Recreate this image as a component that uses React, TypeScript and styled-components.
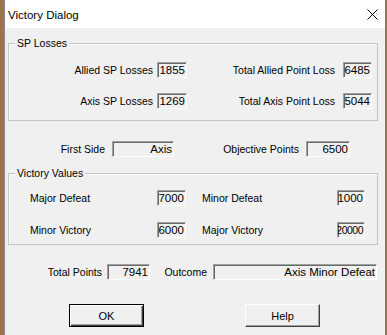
import React from "react";
import styled, { createGlobalStyle } from "styled-components";

const GlobalStyle = createGlobalStyle`
  html, body {
    margin: 0;
    padding: 0;
    height: 100%;
    overflow: hidden;
  }
  body {
    background: #9a7646;
    font-family: "Liberation Sans", Arial, sans-serif;
    font-size: 10.5px;
    color: #000;
  }
`

const Window = styled.div`
  margin-left: 4px;
  width: 381px;
  height: 335px;
  background: #f0f0f0;
  border-left: 1px solid #8a8a8a;
  box-sizing: border-box;
`
const TitleBar = styled.div`
  height: 28px;
  background: #ffffff;
  display: flex;
  align-items: center;
  justify-content: space-between;
  padding: 0 7px 0 3px;
`
const Title = styled.span`
  font-size: 11.5px;
  padding-top: 1px;
`
const Body = styled.div`
  padding: 0 7px 0 3px;
`
const GroupBox = styled.div<{ $top: number; $pt: number; $pb: number }>`
  position: relative;
  margin-top: ${(p) => p.$top}px;
  border: 1px solid #c4c4c4;
  box-shadow: inset 1px 1px #fff;
  padding: ${(p) => p.$pt}px 0 ${(p) => p.$pb}px;
  display: flex;
  flex-direction: column;
  gap: ${(p) => (p.$pt > 17 ? 15 : 16)}px;
`
const Caption = styled.span`
  position: absolute;
  top: -7px;
  left: 6px;
  padding: 0 2px;
  background: #f0f0f0;
  line-height: 13px;
`
const Row = styled.div<{ $top?: number; $left?: number }>`
  display: flex;
  align-items: center;
  margin-top: ${(p) => p.$top ?? 0}px;
  padding-left: ${(p) => p.$left ?? 0}px;
`
const Label = styled.span<{ $w: number; $gap: number; $right?: boolean; $offset?: number }>`
  width: ${(p) => p.$w}px;
  margin-left: ${(p) => p.$offset ?? 0}px;
  margin-right: ${(p) => p.$gap}px;
  text-align: ${(p) => (p.$right ? "right" : "left")};
  white-space: nowrap;
  flex-shrink: 0;
`
const Field = styled.div<{ $w: number; $tight?: boolean }>`
  width: ${(p) => p.$w}px;
  height: 16px;
  box-sizing: border-box;
  flex-shrink: 0;
  border-top: 1px solid #a0a0a0;
  border-left: 1px solid #a0a0a0;
  border-right: 1px solid #ffffff;
  border-bottom: 1px solid #ffffff;
  box-shadow: inset 1px 1px #696969;
  display: flex;
  justify-content: flex-end;
  align-items: flex-end;
  overflow: hidden;
  padding: 0 1px 0 0;
  font-size: ${(p) => (p.$tight ? 10.5 : 11.5)}px;
  letter-spacing: ${(p) => (p.$tight ? -0.5 : 0)}px;
  line-height: 13px;
  white-space: nowrap;
`
const ButtonRow = styled.div`
  display: flex;
  margin-top: 24px;
  padding-left: 61px;
  gap: 101px;
`
const Button = styled.button<{ $default?: boolean }>`
  width: 75px;
  height: 23px;
  padding: 0;
  font-family: "Liberation Sans", Arial, sans-serif;
  font-size: 11px;
  color: #000;
  background: #f0f0f0;
  box-sizing: border-box;
  border: 1px solid ${(p) => (p.$default ? "#000" : "#f0f0f0")};
  border-top-color: ${(p) => (p.$default ? "#000" : "#fff")};
  border-left-color: ${(p) => (p.$default ? "#000" : "#fff")};
  border-right-color: ${(p) => (p.$default ? "#000" : "#404040")};
  border-bottom-color: ${(p) => (p.$default ? "#000" : "#404040")};
  box-shadow: ${(p) =>
    p.$default
      ? "inset 1px 1px #fff, inset -1px -1px #404040, inset -2px -2px #a0a0a0"
      : "inset -1px -1px #a0a0a0"};
`

const CloseIcon = () => (
  <svg width="11" height="11" viewBox="0 0 11 11">
    <path d="M0.5 0.5 L10.5 10.5 M10.5 0.5 L0.5 10.5" stroke="#000" strokeWidth="1" />
  </svg>
)

const App: React.FC = () => {
  return (
    <>
      <GlobalStyle />
      <Window>
        <TitleBar>
          <Title>Victory Dialog</Title>
          <CloseIcon />
        </TitleBar>
        <Body>
          <GroupBox $top={15} $pt={18} $pb={11}>
            <Caption>SP Losses</Caption>
            <Row>
              <Label $w={144} $gap={4} $right>Allied SP Losses</Label>
              <Field $w={30}>1855</Field>
              <Label $w={148} $gap={8} $right>Total Allied Point Loss</Label>
              <Field $w={29}>6485</Field>
            </Row>
            <Row>
              <Label $w={144} $gap={4} $right>Axis SP Losses</Label>
              <Field $w={30}>1269</Field>
              <Label $w={148} $gap={8} $right>Total Axis Point Loss</Label>
              <Field $w={29}>5044</Field>
            </Row>
          </GroupBox>

          <Row $top={20}>
            <Label $w={97} $gap={7} $right>First Side</Label>
            <Field $w={62}>Axis</Field>
            <Label $w={125} $gap={7} $right>Objective Points</Label>
            <Field $w={44}>6500</Field>
          </Row>

          <GroupBox $top={16} $pt={16} $pb={6}>
            <Caption>Victory Values</Caption>
            <Row $left={21}>
              <Label $w={127} $gap={0}>Major Defeat</Label>
              <Field $w={29}>7000</Field>
              <Label $w={135} $gap={0} $offset={16}>Minor Defeat</Label>
              <Field $w={28}>1000</Field>
            </Row>
            <Row $left={21}>
              <Label $w={127} $gap={0}>Minor Victory</Label>
              <Field $w={29}>6000</Field>
              <Label $w={135} $gap={0} $offset={16}>Major Victory</Label>
              <Field $w={28} $tight>20000</Field>
            </Row>
          </GroupBox>

          <Row $top={19}>
            <Label $w={94} $gap={5} $right>Total Points</Label>
            <Field $w={43}>7941</Field>
            <Label $w={57} $gap={6} $right>Outcome</Label>
            <Field $w={164}>Axis Minor Defeat</Field>
          </Row>

          <ButtonRow>
            <Button $default>OK</Button>
            <Button>Help</Button>
          </ButtonRow>
        </Body>
      </Window>
    </>
  );
}
export default App;
